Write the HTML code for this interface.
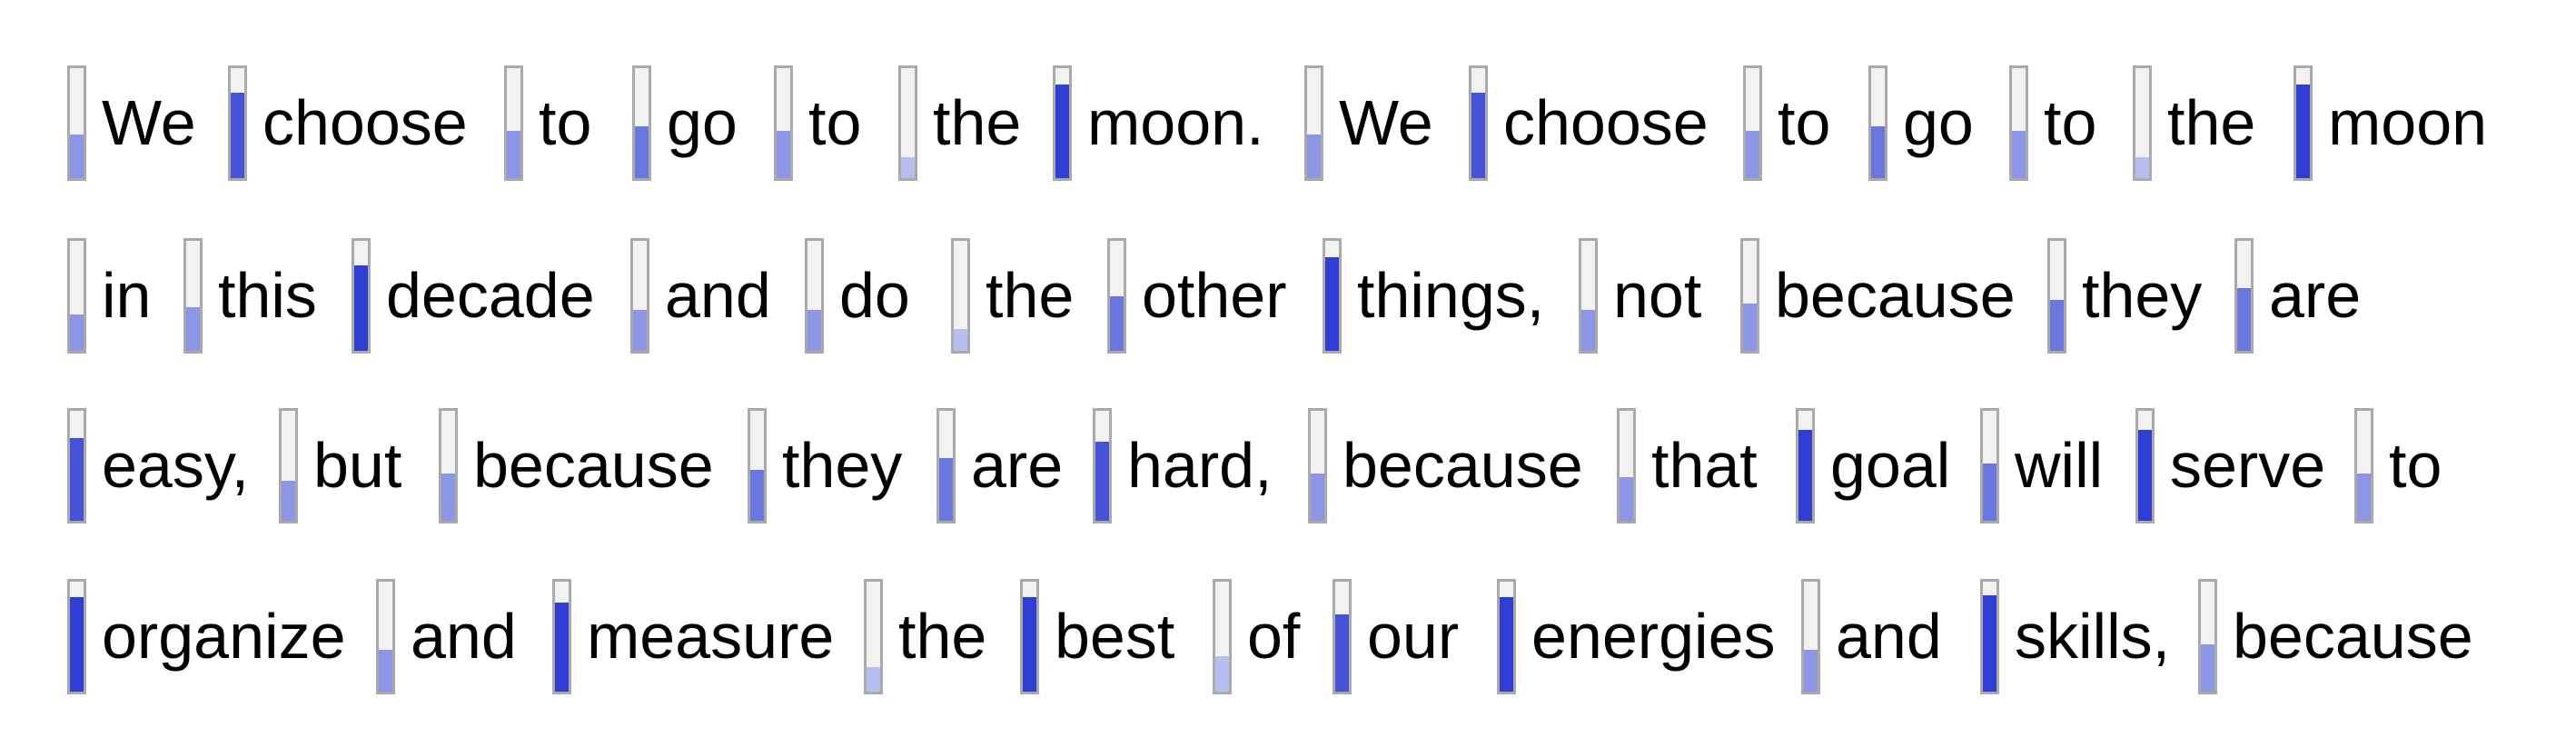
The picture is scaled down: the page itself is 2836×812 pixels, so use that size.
<!DOCTYPE html>
<html><head><style>
body{margin:0;width:2836px;height:812px;background:#fff;position:relative;overflow:hidden;font-family:"Liberation Sans",Arial,sans-serif}
.t{position:absolute;height:127px;white-space:nowrap}
.b{position:absolute;left:0;top:0;width:15px;height:121px;border:3px solid #aaa;background:#f2f2f2}
.f{position:absolute;left:0;bottom:0;width:15px}
.w{position:absolute;left:38px;top:28px;font-size:70px;line-height:70px;color:#000}
.c1 .f{background:#b9bef0}.c2 .f{background:#8c96e4}.c3 .f{background:#6a77dc}.c4 .f{background:#4653d7}.c5 .f{background:#2f3ed3}
</style></head><body>
<div class="t c2" style="left:74px;top:72px"><div class="b"><div class="f" style="height:40%"></div></div><span class="w">We</span></div>
<div class="t c4" style="left:251px;top:72px"><div class="b"><div class="f" style="height:78%"></div></div><span class="w">choose</span></div>
<div class="t c2" style="left:555px;top:72px"><div class="b"><div class="f" style="height:43%"></div></div><span class="w">to</span></div>
<div class="t c3" style="left:696px;top:72px"><div class="b"><div class="f" style="height:47%"></div></div><span class="w">go</span></div>
<div class="t c2" style="left:852px;top:72px"><div class="b"><div class="f" style="height:43%"></div></div><span class="w">to</span></div>
<div class="t c1" style="left:989px;top:72px"><div class="b"><div class="f" style="height:19%"></div></div><span class="w">the</span></div>
<div class="t c5" style="left:1159px;top:72px"><div class="b"><div class="f" style="height:85%"></div></div><span class="w">moon.</span></div>
<div class="t c2" style="left:1436px;top:72px"><div class="b"><div class="f" style="height:40%"></div></div><span class="w">We</span></div>
<div class="t c4" style="left:1617px;top:72px"><div class="b"><div class="f" style="height:78%"></div></div><span class="w">choose</span></div>
<div class="t c2" style="left:1919px;top:72px"><div class="b"><div class="f" style="height:43%"></div></div><span class="w">to</span></div>
<div class="t c3" style="left:2057px;top:72px"><div class="b"><div class="f" style="height:47%"></div></div><span class="w">go</span></div>
<div class="t c2" style="left:2212px;top:72px"><div class="b"><div class="f" style="height:43%"></div></div><span class="w">to</span></div>
<div class="t c1" style="left:2348px;top:72px"><div class="b"><div class="f" style="height:19%"></div></div><span class="w">the</span></div>
<div class="t c5" style="left:2525px;top:72px"><div class="b"><div class="f" style="height:85%"></div></div><span class="w">moon</span></div>

<div class="t c2" style="left:74px;top:262px"><div class="b"><div class="f" style="height:33%"></div></div><span class="w">in</span></div>
<div class="t c2" style="left:202px;top:262px"><div class="b"><div class="f" style="height:40%"></div></div><span class="w">this</span></div>
<div class="t c5" style="left:387px;top:262px"><div class="b"><div class="f" style="height:78%"></div></div><span class="w">decade</span></div>
<div class="t c2" style="left:694px;top:262px"><div class="b"><div class="f" style="height:37%"></div></div><span class="w">and</span></div>
<div class="t c2" style="left:886px;top:262px"><div class="b"><div class="f" style="height:37%"></div></div><span class="w">do</span></div>
<div class="t c1" style="left:1047px;top:262px"><div class="b"><div class="f" style="height:20%"></div></div><span class="w">the</span></div>
<div class="t c3" style="left:1219px;top:262px"><div class="b"><div class="f" style="height:50%"></div></div><span class="w">other</span></div>
<div class="t c5" style="left:1456px;top:262px"><div class="b"><div class="f" style="height:85%"></div></div><span class="w">things,</span></div>
<div class="t c2" style="left:1738px;top:262px"><div class="b"><div class="f" style="height:37%"></div></div><span class="w">not</span></div>
<div class="t c2" style="left:1916px;top:262px"><div class="b"><div class="f" style="height:43%"></div></div><span class="w">because</span></div>
<div class="t c3" style="left:2254px;top:262px"><div class="b"><div class="f" style="height:46%"></div></div><span class="w">they</span></div>
<div class="t c3" style="left:2460px;top:262px"><div class="b"><div class="f" style="height:57%"></div></div><span class="w">are</span></div>

<div class="t c4" style="left:74px;top:449px"><div class="b"><div class="f" style="height:75%"></div></div><span class="w">easy,</span></div>
<div class="t c2" style="left:307px;top:449px"><div class="b"><div class="f" style="height:36%"></div></div><span class="w">but</span></div>
<div class="t c2" style="left:483px;top:449px"><div class="b"><div class="f" style="height:43%"></div></div><span class="w">because</span></div>
<div class="t c3" style="left:823px;top:449px"><div class="b"><div class="f" style="height:46%"></div></div><span class="w">they</span></div>
<div class="t c3" style="left:1031px;top:449px"><div class="b"><div class="f" style="height:57%"></div></div><span class="w">are</span></div>
<div class="t c4" style="left:1203px;top:449px"><div class="b"><div class="f" style="height:72%"></div></div><span class="w">hard,</span></div>
<div class="t c2" style="left:1440px;top:449px"><div class="b"><div class="f" style="height:43%"></div></div><span class="w">because</span></div>
<div class="t c2" style="left:1780px;top:449px"><div class="b"><div class="f" style="height:40%"></div></div><span class="w">that</span></div>
<div class="t c5" style="left:1977px;top:449px"><div class="b"><div class="f" style="height:83%"></div></div><span class="w">goal</span></div>
<div class="t c3" style="left:2180px;top:449px"><div class="b"><div class="f" style="height:52%"></div></div><span class="w">will</span></div>
<div class="t c5" style="left:2351px;top:449px"><div class="b"><div class="f" style="height:83%"></div></div><span class="w">serve</span></div>
<div class="t c2" style="left:2592px;top:449px"><div class="b"><div class="f" style="height:43%"></div></div><span class="w">to</span></div>

<div class="t c5" style="left:74px;top:637px"><div class="b"><div class="f" style="height:86%"></div></div><span class="w">organize</span></div>
<div class="t c2" style="left:414px;top:637px"><div class="b"><div class="f" style="height:38%"></div></div><span class="w">and</span></div>
<div class="t c5" style="left:608px;top:637px"><div class="b"><div class="f" style="height:81%"></div></div><span class="w">measure</span></div>
<div class="t c1" style="left:951px;top:637px"><div class="b"><div class="f" style="height:22%"></div></div><span class="w">the</span></div>
<div class="t c5" style="left:1123px;top:637px"><div class="b"><div class="f" style="height:86%"></div></div><span class="w">best</span></div>
<div class="t c1" style="left:1335px;top:637px"><div class="b"><div class="f" style="height:32%"></div></div><span class="w">of</span></div>
<div class="t c4" style="left:1467px;top:637px"><div class="b"><div class="f" style="height:70%"></div></div><span class="w">our</span></div>
<div class="t c5" style="left:1648px;top:637px"><div class="b"><div class="f" style="height:86%"></div></div><span class="w">energies</span></div>
<div class="t c2" style="left:1983px;top:637px"><div class="b"><div class="f" style="height:38%"></div></div><span class="w">and</span></div>
<div class="t c5" style="left:2180px;top:637px"><div class="b"><div class="f" style="height:88%"></div></div><span class="w">skills,</span></div>
<div class="t c2" style="left:2420px;top:637px"><div class="b"><div class="f" style="height:43%"></div></div><span class="w">because</span></div>
</body></html>
